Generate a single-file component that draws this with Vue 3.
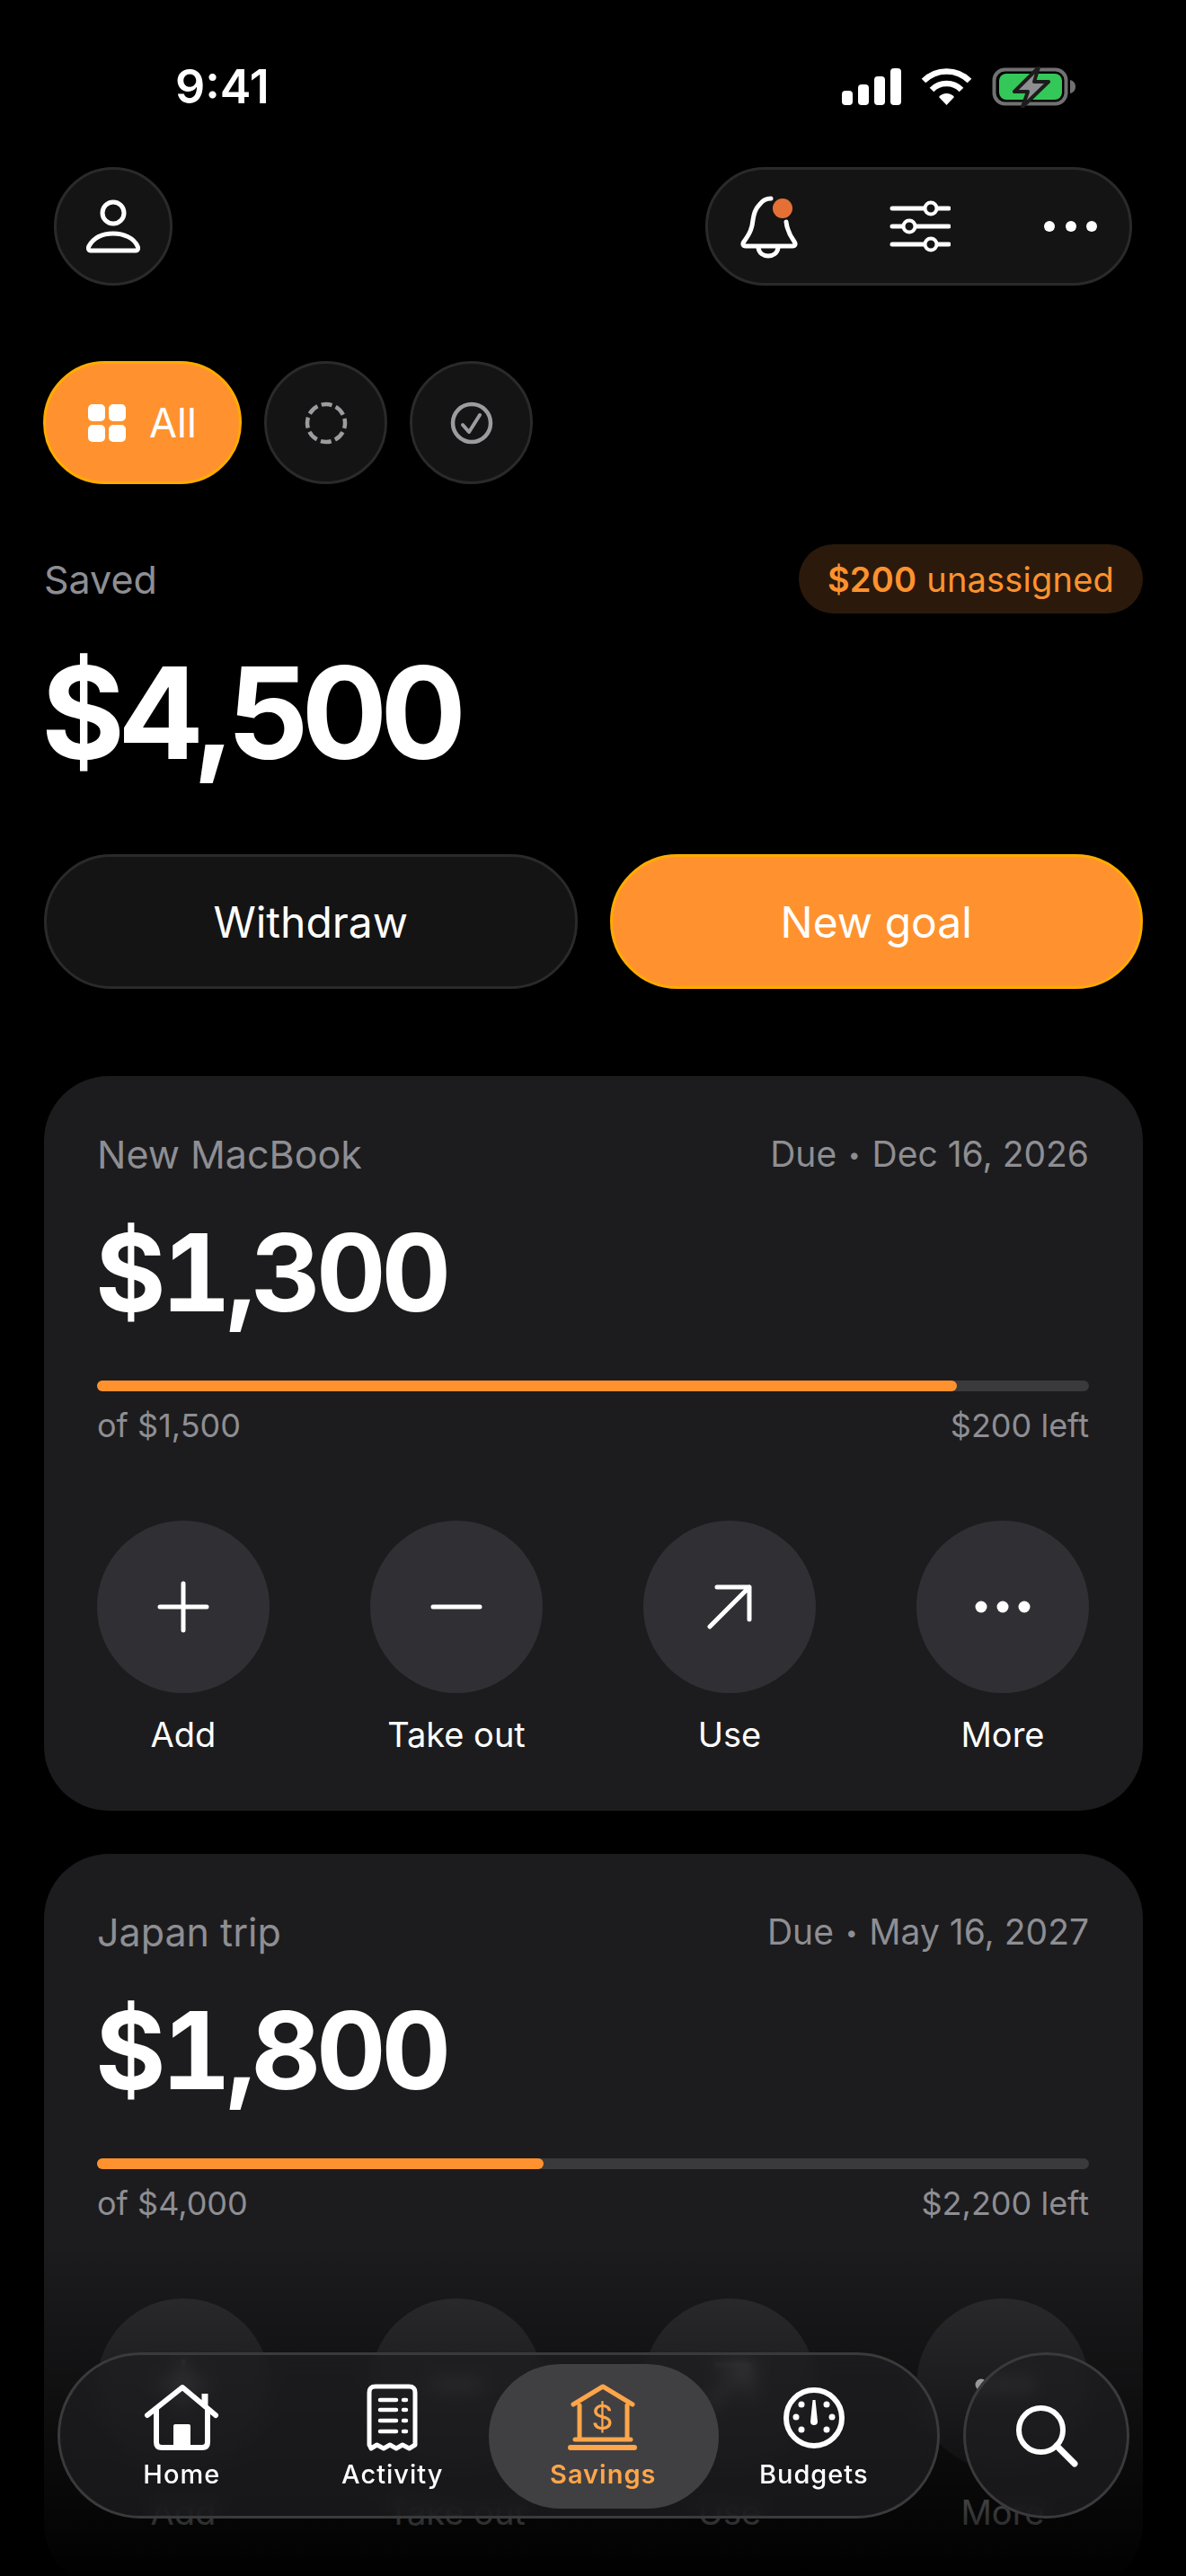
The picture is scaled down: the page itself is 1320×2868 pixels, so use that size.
<script setup>
const goals = [
  { name: 'New MacBook', due: 'Dec 16, 2026', saved: '$1,300', total: '$1,500', left: '$200 left', percent: 86.67 },
  { name: 'Japan trip', due: 'May 16, 2027', saved: '$1,800', total: '$4,000', left: '$2,200 left', percent: 45 },
];

const actions = ['Add', 'Take out', 'Use', 'More'];
</script>

<template>
  <div class="screen">
    <div class="status">
      <span class="time">9:41</span>
      <svg class="status-icons" width="262" height="46" viewBox="936 74 262 46">
        <g fill="#fff">
          <rect x="937" y="101" width="12" height="16" rx="4" />
          <rect x="955" y="94" width="12" height="23" rx="4" />
          <rect x="973" y="85" width="12" height="32" rx="4" />
          <rect x="991" y="76" width="12" height="41" rx="4" />
        </g>
        <g fill="none" stroke="#fff" stroke-width="6.5">
          <path d="M1028 90a36 36 0 0 1 51 0" />
          <path d="M1037 100a23 23 0 0 1 33 0" />
        </g>
        <path d="M1053.500 117l-8.500-9a11 11 0 0 1 17 0z" fill="#fff" />
        <rect x="1106.500" y="77.500" width="80" height="38" rx="12" fill="none" stroke="#717174" stroke-width="4" />
        <path d="M1191 89c4 1 6 4 6 7.500s-2 6.500-6 7.500z" fill="#717174" />
        <rect x="1112" y="82" width="70" height="29" rx="8" fill="#34c759" />
        <path d="M1156 75l-27 27h15l-6 17 29-28h-16z" fill="#8e8e90" stroke="#1c1c1c" stroke-width="4" stroke-linejoin="round" />
      </svg>
    </div>

    <header class="top">
      <button class="round top-avatar">
        <svg width="60" height="60" viewBox="96 222 60 60" fill="none" stroke="#fff" stroke-width="5">
          <circle cx="126" cy="237" r="12" />
          <path d="M101 279c-3 0-3-3-2-5 5-9 15-14 27-14s23 5 27 14c1 2 1 5-2 5z" stroke-linejoin="round" />
        </svg>
      </button>
      <div class="top-tools">
        <svg width="65" height="72" viewBox="822 216 65 72" fill="none" stroke="#fff" stroke-width="5" stroke-linecap="round">
          <path d="M857 221c-6 0-9 2-12 6-6 6-7 12-8 18-1 11-5 17-10 24-2 3-1 5 2 5h52c3 0 4-2 2-5-5-7-8-13-9-22" />
          <path d="M843 276c1 6 6 9 11 9s10-3 11-9" />
          <circle cx="870" cy="232" r="11" fill="#e57035" stroke="none" />
        </svg>
        <svg width="69" height="60" viewBox="988 222 69 60" fill="none" stroke="#fff" stroke-width="5" stroke-linecap="round">
          <path d="M992 232h63M992 252h63M992 272h63" />
          <circle cx="1035" cy="232" r="6.500" fill="#141414" stroke-width="4" />
          <circle cx="1011" cy="252" r="6.500" fill="#141414" stroke-width="4" />
          <circle cx="1035" cy="272" r="6.500" fill="#141414" stroke-width="4" />
        </svg>
        <svg width="62" height="20" viewBox="1158 243 62 20" fill="#fff">
          <circle cx="1167" cy="253" r="6" />
          <circle cx="1191" cy="253" r="6" />
          <circle cx="1214" cy="253" r="6" />
        </svg>
      </div>
    </header>

    <nav class="filters">
      <button class="filter-all">
        <span class="grid-icon"><i></i><i></i><i></i><i></i></span>
        <span>All</span>
      </button>
      <button class="filter-round">
        <svg width="50" height="50" viewBox="0 0 50 50" fill="none" stroke="#9c9ca0" stroke-width="4.500">
          <circle cx="25" cy="25" r="21" stroke-dasharray="12 4.490" stroke-dashoffset="6" />
        </svg>
      </button>
      <button class="filter-round">
        <svg width="50" height="50" viewBox="0 0 50 50" fill="none" stroke="#9c9ca0" stroke-linecap="round" stroke-linejoin="round">
          <circle cx="25" cy="25" r="21" stroke-width="4.500" />
          <path d="M15 27l7 8 12-19" stroke-width="4" />
        </svg>
      </button>
    </nav>

    <section class="summary">
      <div class="summary-row">
        <span class="saved-label">Saved</span>
        <span class="unassigned"><b>$200</b> unassigned</span>
      </div>
      <div class="saved-amount">$4,500</div>
      <div class="summary-buttons">
        <button class="btn btn-dark">Withdraw</button>
        <button class="btn btn-orange">New goal</button>
      </div>
    </section>

    <section class="goals">
      <article v-for="goal in goals" :key="goal.name" class="card">
        <div class="card-head">
          <span>{{ goal.name }}</span>
          <span class="card-due">Due <em class="sep">•</em> {{ goal.due }}</span>
        </div>
        <div class="card-amount">{{ goal.saved }}</div>
        <div class="bar">
          <div class="bar-fill" :style="{ width: goal.percent + '%' }"></div>
        </div>
        <div class="card-foot">
          <span>of {{ goal.total }}</span>
          <span>{{ goal.left }}</span>
        </div>
        <div class="actions">
          <div v-for="action in actions" :key="action" class="action">
            <div class="action-circle">
              <svg width="64" height="64" viewBox="0 0 64 64" fill="none" stroke="#fff" stroke-width="5" stroke-linecap="round" stroke-linejoin="round">
                <path v-if="action === 'Add'" d="M6 32h52M32 6v52" />
                <path v-else-if="action === 'Take out'" d="M6 32h52" />
                <path v-else-if="action === 'Use'" d="M10 54l44-44M18 10h36v36" />
                <g v-else fill="#fff" stroke="none">
                  <circle cx="8" cy="32" r="6.500" />
                  <circle cx="32" cy="32" r="6.500" />
                  <circle cx="56" cy="32" r="6.500" />
                </g>
              </svg>
            </div>
            <span class="action-label">{{ action }}</span>
          </div>
        </div>
      </article>
    </section>

    <div class="fade"></div>

    <div class="tabbar">
      <a class="tab">
        <svg width="84" height="78" viewBox="160 2652 84 78" fill="none" stroke="#fff" stroke-width="6" stroke-linecap="round" stroke-linejoin="round">
          <path d="M164 2689l39-31 37 31" />
          <path d="M228 2678v-13" stroke-linecap="butt" stroke-width="7" />
          <path d="M174 2682v37c0 4 2 6 6 6h45c4 0 6-2 6-6v-37" />
          <rect x="193" y="2699" width="19" height="26" rx="2" fill="#fff" stroke="none" />
        </svg>
        <span>Home</span>
      </a>
      <a class="tab">
        <svg width="62" height="78" viewBox="406 2652 62 78" fill="none" stroke="#fff" stroke-linecap="round" stroke-linejoin="round">
          <path d="M411 2722v-58c0-5 2-7 7-7h37c5 0 7 2 7 7v58l-6.500 4-7.500-4-7 4-7-4-7 4-7.500-4-6.500 4z" stroke-width="5" />
          <path d="M423 2672h18M423 2683h18M423 2695h18M423 2707h18" stroke-width="4.500" />
          <path d="M449 2672h3M449 2683h3M449 2695h3M449 2707h3" stroke-width="4.500" />
        </svg>
        <span>Activity</span>
      </a>
      <a class="tab tab-active">
        <svg width="80" height="78" viewBox="632 2652 80 78" fill="none" stroke="#ffa54a" stroke-width="5" stroke-linecap="round" stroke-linejoin="round">
          <path d="M639 2677l33-20 33 20" />
          <path d="M646 2678v36M699 2678v36M641 2716h62" />
          <path d="M636 2725h71" stroke-width="6" />
          <text x="672" y="2705" text-anchor="middle" font-family="Inter, sans-serif" font-size="38" font-weight="400" fill="#ffa54a" stroke="none">$</text>
        </svg>
        <span>Savings</span>
      </a>
      <a class="tab">
        <svg width="72" height="78" viewBox="870 2652 72 78" fill="#fff">
          <circle cx="906" cy="2692" r="31" fill="none" stroke="#fff" stroke-width="6" />
          <path d="M904.500 2672h3l2.500 24a4 4 0 0 1-8 0z" />
          <circle cx="892" cy="2677" r="3.500" />
          <circle cx="920" cy="2677" r="3.500" />
          <circle cx="886" cy="2691" r="3.500" />
          <circle cx="926" cy="2691" r="3.500" />
          <circle cx="892" cy="2705" r="3.500" />
          <circle cx="920" cy="2705" r="3.500" />
        </svg>
        <span>Budgets</span>
      </a>
    </div>

    <button class="search">
      <svg width="76" height="76" viewBox="1126 2674 76 76" fill="none" stroke="#fff" stroke-linecap="round">
        <circle cx="1157.500" cy="2705.500" r="24.500" stroke-width="6" />
        <path d="M1175 2723l20 20" stroke-width="7" />
      </svg>
    </button>
  </div>
</template>

<style>
html,
body {
  margin: 0;
  background: #000;
}
</style>

<style scoped>
.screen {
  position: relative;
  width: 1320px;
  height: 2868px;
  overflow: hidden;
  background: #000;
  color: #fff;
  font-family: Inter, "Liberation Sans", sans-serif;
}

button {
  font-family: inherit;
  color: inherit;
  padding: 0;
  cursor: pointer;
}

svg {
  display: block;
}

.status {
  height: 186px;
  box-sizing: border-box;
  padding: 0 122px 0 195px;
  display: flex;
  justify-content: space-between;
  align-items: flex-start;
}

.time {
  margin-top: 66px;
  font-size: 52px;
  line-height: 62px;
  font-weight: 600;
}

.status-icons {
  margin-top: 74px;
}

.top {
  display: flex;
  justify-content: space-between;
  padding: 0 60px;
}

.round,
.filter-round {
  display: flex;
  align-items: center;
  justify-content: center;
  border-radius: 50%;
  background: #141414;
  border: 3px solid #2a2a2b;
  box-sizing: border-box;
}

.top-avatar {
  width: 132px;
  height: 132px;
}

.top-tools {
  width: 475px;
  height: 132px;
  box-sizing: border-box;
  padding: 0 36px 0 35px;
  display: flex;
  align-items: center;
  justify-content: space-between;
  border-radius: 66px;
  background: #141414;
  border: 3px solid #2a2a2b;
}

.filters {
  margin-top: 84px;
  padding-left: 48px;
  display: flex;
  gap: 25px;
}

.filter-all {
  width: 221px;
  height: 137px;
  display: flex;
  align-items: center;
  justify-content: center;
  gap: 26px;
  border-radius: 69px;
  background: #ff922e;
  border: 3px solid #ffab00;
  box-sizing: border-box;
  font-size: 45px;
}

.grid-icon {
  width: 42px;
  height: 42px;
  display: grid;
  grid-template-columns: 1fr 1fr;
  gap: 4px;
}

.grid-icon i {
  background: #fff;
  border-radius: 5px;
}

.filter-round {
  width: 137px;
  height: 137px;
}

.summary {
  padding: 0 48px 0 49px;
}

.summary-row {
  margin-top: 67px;
  display: flex;
  justify-content: space-between;
  align-items: center;
}

.saved-label {
  font-size: 43px;
  color: #8e8e93;
}

.unassigned {
  height: 77px;
  box-sizing: border-box;
  padding: 0 32px;
  display: flex;
  align-items: center;
  gap: 11px;
  border-radius: 39px;
  background: #2b1a0b;
  color: #ff922e;
  font-size: 38px;
  letter-spacing: 0.2px;
}

.unassigned b {
  font-weight: 600;
}

.saved-amount {
  margin-top: 39px;
  margin-left: -3px;
  font-size: 142px;
  line-height: 142px;
  font-weight: 700;
  letter-spacing: -8px;
}

.summary-buttons {
  margin-top: 87px;
  display: flex;
  gap: 36px;
}

.btn {
  flex: 1;
  height: 150px;
  border-radius: 75px;
  font-size: 48px;
  box-sizing: border-box;
}

.btn-dark {
  background: #141414;
  border: 3px solid #2a2a2b;
}

.btn-orange {
  background: #ff922e;
  border: 3px solid #ffab00;
}

.goals {
  margin-top: 97px;
  padding: 0 48px 0 49px;
  display: flex;
  flex-direction: column;
  gap: 48px;
}

.card {
  box-sizing: border-box;
  height: 818px;
  flex-shrink: 0;
  padding: 65px 60px 60px 59px;
  border-radius: 72px;
  background: #1c1c1e;
}

.card-head,
.card-foot {
  display: flex;
  justify-content: space-between;
  color: #8e8e93;
}

.card-head {
  font-size: 43px;
  line-height: 44px;
}

.card-due {
  font-size: 39px;
}

.sep {
  font-style: normal;
  font-size: 24px;
  vertical-align: 5px;
  margin: 0 2px;
}

.card-amount {
  margin-top: 49px;
  margin-left: -2px;
  font-size: 120px;
  line-height: 120px;
  font-weight: 700;
  font-variant-numeric: tabular-nums;
  letter-spacing: -5px;
}

.bar {
  margin-top: 60px;
  height: 12px;
  border-radius: 6px;
  background: #3a3a3c;
}

.bar-fill {
  height: 100%;
  border-radius: 6px;
  background: #ff922e;
}

.card-foot {
  margin-top: 18px;
  font-size: 36px;
  line-height: 40px;
}

.actions {
  margin-top: 86px;
  display: flex;
  justify-content: space-between;
}

.action {
  width: 192px;
  display: flex;
  flex-direction: column;
  align-items: center;
  gap: 24px;
}

.action-circle {
  width: 192px;
  height: 192px;
  border-radius: 50%;
  background: #303034;
  display: flex;
  align-items: center;
  justify-content: center;
}

.action-label {
  font-size: 38px;
  line-height: 44px;
}

.fade {
  position: absolute;
  left: 0;
  right: 0;
  bottom: 0;
  height: 370px;
  background: linear-gradient(to bottom, rgba(0, 0, 0, 0), rgba(0, 0, 0, 0.97));
}

.tabbar,
.search {
  position: absolute;
  top: 2619px;
  height: 185px;
  box-sizing: border-box;
  background: rgba(31, 31, 33, 0.72);
  backdrop-filter: blur(10px);
  border: 3px solid #3a3a3c;
}

.tabbar {
  left: 64px;
  width: 982px;
  padding-left: 18px;
  display: flex;
  border-radius: 93px;
}

.tab {
  position: relative;
  width: 234.500px;
  padding-top: 30px;
  display: flex;
  flex-direction: column;
  align-items: center;
  font-size: 29px;
  line-height: 36px;
  font-weight: 500;
  letter-spacing: 1px;
}

.tab span {
  position: relative;
  margin-top: 7px;
}

.tab svg {
  position: relative;
}

.tab-active {
  color: #ffa54a;
  font-weight: 600;
}

.tab-active::before {
  content: "";
  position: absolute;
  top: 10px;
  bottom: 8px;
  left: -10px;
  right: -11px;
  border-radius: 80px;
  background: #404042;
}

.search {
  left: 1072px;
  width: 185px;
  border-radius: 50%;
  display: flex;
  align-items: center;
  justify-content: center;
}
</style>
